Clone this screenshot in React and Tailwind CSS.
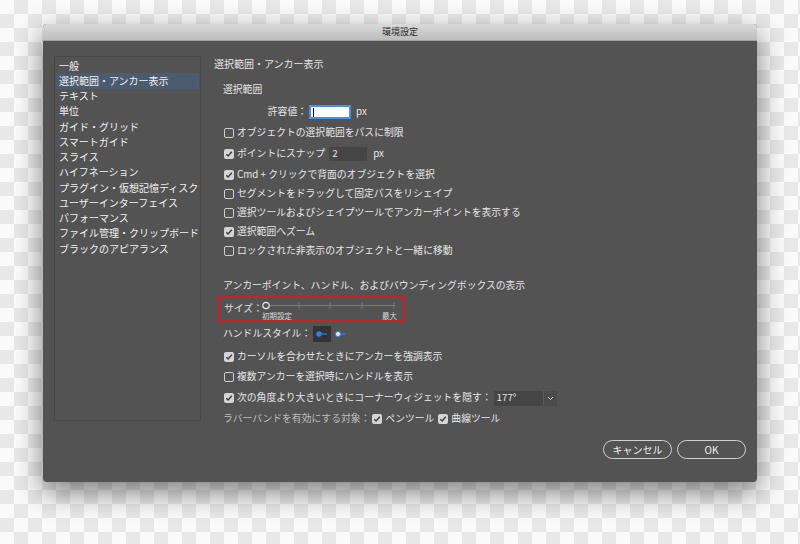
import React from "react";

function Check({ checked }) {
  if (checked) {
    return (
      <span className="w-[10px] h-[10px] rounded-[2px] bg-[#d4d4d4] flex items-center justify-center shrink-0">
        <svg width="8" height="8" viewBox="0 0 8 8">
          <path d="M1.3 4.2 L3.1 6 L6.8 1.8" fill="none" stroke="#3c3c3c" strokeWidth="1.4" />
        </svg>
      </span>
    );
  }
  return <span className="w-[10px] h-[10px] rounded-[2px] border border-[#cfcfcf] shrink-0" />;
}

function Row({ h, checked, children, extra }) {
  return (
    <div className={`flex items-center ml-[10px] ${h}`}>
      <Check checked={checked} />
      <span className="ml-[3px]">{children}</span>
      {extra}
    </div>
  );
}

const items = [
  "一般",
  "選択範囲・アンカー表示",
  "テキスト",
  "単位",
  "ガイド・グリッド",
  "スマートガイド",
  "スライス",
  "ハイフネーション",
  "プラグイン・仮想記憶ディスク",
  "ユーザーインターフェイス",
  "パフォーマンス",
  "ファイル管理・クリップボード",
  "ブラックのアピアランス",
];

export default function App() {
  return (
    <div className="w-[800px] h-[544px] overflow-hidden bg-[image:repeating-conic-gradient(#e8e8e8_0%_25%,#fafafa_0%_50%)] bg-[length:28px_28px] pt-[24px] pl-[43px] font-['Noto_Sans_CJK_JP','Noto_Sans',sans-serif]">
      <div className="w-[714px] h-[458px] flex flex-col rounded-[4px] bg-[#535353] shadow-[0_10px_28px_rgba(0,0,0,0.5)] overflow-hidden">
        <div className="h-[17px] shrink-0 bg-gradient-to-b from-[#d9d9d9] to-[#bdbdbd] border-b border-[#a0a0a0] flex items-center justify-center text-[9px] text-[#2a2a2a]">
          環境設定
        </div>
        <div className="flex-1 flex pt-[15px] pl-[11px] pr-[11px] text-[10px] text-[#e6e6e6] leading-none">
          <div className="w-[147px] h-[365px] shrink-0 border border-[#474747] pt-[1px] px-[1px]">
            {items.map((t, i) => (
              <div
                key={t}
                className={`h-[15.25px] flex items-center pl-[3px] text-[#f2f2f2] ${i === 1 ? "bg-[#4b5c70]" : ""}`}
              >
                {t}
              </div>
            ))}
          </div>
          <div className="flex-1 ml-[13px] flex flex-col text-[9.8px]">
            <div className="h-[16px] flex items-center text-[10px]">選択範囲・アンカー表示</div>
            <div className="h-[16px] mt-[10px] flex items-center ml-[9px]">選択範囲</div>
            <div className="h-[16px] mt-[6px] flex items-center">
              <span className="w-[93px] text-right">許容値：</span>
              <span className="ml-[2px] w-[42px] h-[14px] bg-white border-2 border-[#4a90e2] flex items-center pl-[2px]">
                <span className="w-[1px] h-[9px] bg-black" />
              </span>
              <span className="ml-[5px]">px</span>
            </div>
            <div className="mt-[3px]" />
            <Row h="h-[20px]" checked={false}>オブジェクトの選択範囲をパスに制限</Row>
            <Row
              h="h-[22px]"
              checked={true}
              extra={
                <>
                  <span className="ml-[4px] w-[38px] h-[14px] bg-[#454545] flex items-center pl-[3px]">2</span>
                  <span className="ml-[6px]">px</span>
                </>
              }
            >
              ポイントにスナップ
            </Row>
            <Row h="h-[20px]" checked={true}>Cmd + クリックで背面のオブジェクトを選択</Row>
            <Row h="h-[18px]" checked={false}>セグメントをドラッグして固定パスをリシェイプ</Row>
            <Row h="h-[20px]" checked={false}>選択ツールおよびシェイプツールでアンカーポイントを表示する</Row>
            <Row h="h-[18px]" checked={true}>選択範囲へズーム</Row>
            <Row h="h-[20px]" checked={false}>ロックされた非表示のオブジェクトと一緒に移動</Row>

            <div className="h-[16px] mt-[17px] flex items-center ml-[9px]">
              アンカーポイント、ハンドル、およびバウンディングボックスの表示
            </div>
            <div className="mt-[2px] ml-[4px] w-[187px] h-[26px] border-[2.5px] border-[#c9202a] flex items-start pl-[4px] pt-[3px]">
              <span className="mt-[3px] text-[#e0e0e0]">サイズ：</span>
              <div className="ml-[-1px] relative w-[140px] h-[20px]">
                <svg width="140" height="12" viewBox="0 0 140 12" className="block">
                  <line x1="6.5" y1="4.5" x2="133" y2="4.5" stroke="#7a7a7a" strokeWidth="1" />
                  {[37, 68, 100, 132].map((x) => (
                    <line key={x} x1={x} y1="1.5" x2={x} y2="7.5" stroke="#7a7a7a" strokeWidth="1" />
                  ))}
                  <circle cx="4" cy="4.5" r="3.2" fill="#535353" stroke="#e8e8e8" strokeWidth="1.2" />
                </svg>
                <div className="flex justify-between w-[135px] text-[7.5px] text-[#d8d8d8] mt-[-1px]">
                  <span>初期設定</span>
                  <span>最大</span>
                </div>
              </div>
            </div>
            <div className="h-[16px] mt-[4px] flex items-center ml-[9px]">
              <span>ハンドルスタイル：</span>
              <span className="ml-[2px] w-[18px] h-[16px] bg-[#333333] flex items-center justify-center">
                <svg width="14" height="8" viewBox="0 0 14 8">
                  <line x1="4" y1="4" x2="12" y2="4" stroke="#2f7fe0" strokeWidth="1.2" />
                  <circle cx="4" cy="4" r="2.8" fill="#2f7fe0" />
                </svg>
              </span>
              <span className="ml-[3px] w-[12px] h-[16px] flex items-center justify-center">
                <svg width="12" height="8" viewBox="0 0 12 8">
                  <line x1="4" y1="4" x2="11" y2="4" stroke="#2f7fe0" strokeWidth="1.2" />
                  <circle cx="4" cy="4" r="2.6" fill="#dfe8f5" stroke="#2f7fe0" strokeWidth="1" />
                </svg>
              </span>
            </div>
            <div className="mt-[5px]" />
            <Row h="h-[20px]" checked={true}>カーソルを合わせたときにアンカーを強調表示</Row>
            <Row h="h-[20px]" checked={false}>複数アンカーを選択時にハンドルを表示</Row>
            <Row
              h="h-[22px]"
              checked={true}
              extra={
                <span className="ml-[2px] flex h-[15px]">
                  <span className="w-[49px] bg-[#454545] flex items-center pl-[3px]">177°</span>
                  <span className="w-[14px] bg-[#4b4b4b] border-l border-[#5a5a5a] flex items-center justify-center">
                    <svg width="7" height="5" viewBox="0 0 7 5">
                      <path d="M1 1 L3.5 3.5 L6 1" fill="none" stroke="#cfcfcf" strokeWidth="1" />
                    </svg>
                  </span>
                </span>
              }
            >
              次の角度より大きいときにコーナーウィジェットを隠す：
            </Row>
            <div className="h-[20px] flex items-center ml-[9px] text-[#bdbdbd]">
              <span>ラバーバンドを有効にする対象：</span>
              <span className="ml-[2px]"><Check checked={true} /></span>
              <span className="ml-[3px] text-[#e6e6e6]">ペンツール</span>
              <span className="ml-[4px]"><Check checked={true} /></span>
              <span className="ml-[3px] text-[#e6e6e6]">曲線ツール</span>
            </div>
            <div className="mt-[11px] flex justify-end gap-[5px]">
              <button className="w-[69px] h-[19px] rounded-full border-[1.5px] border-[#d0d0d0] text-[10px] text-[#f0f0f0] flex items-center justify-center">
                キャンセル
              </button>
              <button className="w-[69px] h-[19px] rounded-full border-[1.5px] border-[#d0d0d0] text-[10px] text-[#f0f0f0] flex items-center justify-center">
                OK
              </button>
            </div>
          </div>
        </div>
      </div>
    </div>
  );
}
